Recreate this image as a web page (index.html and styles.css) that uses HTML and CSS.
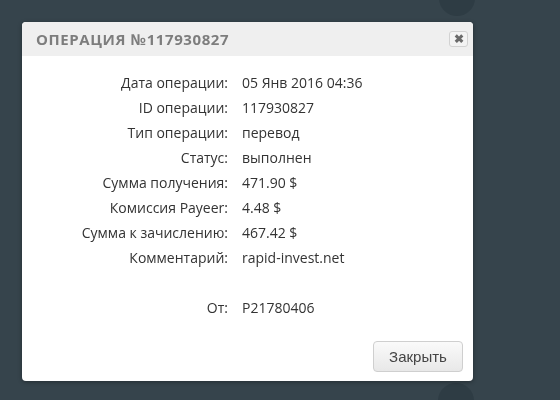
FILE: index.html
```html
<!DOCTYPE html>
<html lang="ru">
  <head>
    <meta charset="UTF-8" />
    <meta name="viewport" content="width=device-width, initial-scale=1.0" />
    <title>Операция</title>
    <link rel="stylesheet" href="styles.css">
  </head>
  <body>
    <div class="page">
      <span class="bubble bubble--top"></span>
      <span class="bubble bubble--bottom"></span>
    </div>

    <div class="modal">
      <div class="modal__header">
        <h2 class="modal__title">Операция №117930827</h2>
        <button class="modal__close" type="button">&#10006;</button>
      </div>

      <div class="modal__body">
        <dl class="details">
          <dt>Дата операции:</dt><dd>05 Янв 2016 04:36</dd>
          <dt>ID операции:</dt><dd>117930827</dd>
          <dt>Тип операции:</dt><dd>перевод</dd>
          <dt>Статус:</dt><dd>выполнен</dd>
          <dt>Сумма получения:</dt><dd>471.90 $</dd>
          <dt>Комиссия Payeer:</dt><dd>4.48 $</dd>
          <dt>Сумма к зачислению:</dt><dd>467.42 $</dd>
          <dt>Комментарий:</dt><dd>rapid-invest.net</dd>
          <dt class="spacer"></dt><dd class="spacer"></dd>
          <dt>От:</dt><dd>P21780406</dd>
        </dl>
      </div>

      <div class="modal__footer">
        <button class="btn" type="button">Закрыть</button>
      </div>
    </div>
  </body>
</html>
```

FILE: styles.css
```css
* {
  box-sizing: border-box;
}
body {
  margin: 0;
  background-color: #36444c;
  font-family: "Open Sans", "Liberation Sans", sans-serif;
}
.page {
  position: relative;
  height: 400px;
  overflow: hidden;
}
.bubble {
  position: absolute;
  width: 36px;
  height: 36px;
  border-radius: 50%;
  background-color: #2e3c44;
}
.bubble--top {
  left: 439px;
  top: -20px;
}
.bubble--bottom {
  left: 438px;
  top: 383px;
}

.modal {
  position: fixed;
  left: 22px;
  top: 22px;
  width: 451px;
  height: 359px;
  background-color: #fff;
  border-radius: 4px;
  box-shadow: 0 1px 4px rgba(0, 0, 0, 0.35);
  display: flex;
  flex-direction: column;
  overflow: hidden;
}
.modal__header {
  display: flex;
  align-items: center;
  justify-content: space-between;
  height: 34px;
  padding: 0 5px 0 14px;
  background-color: #efefef;
}
.modal__title {
  margin: 0;
  font-size: 15px;
  font-weight: 700;
  text-transform: uppercase;
  letter-spacing: 0.6px;
  color: #7d7d7d;
}
.modal__close {
  width: 19px;
  height: 16px;
  padding: 0;
  border: 1px solid #d2d2d2;
  border-radius: 3px;
  background-color: #f3f3f3;
  color: #6a6a6a;
  font-size: 12px;
  font-weight: 700;
  line-height: 14px;
  cursor: pointer;
}

.modal__body {
  flex: 1;
  padding-top: 14px;
}
.details {
  display: grid;
  grid-template-columns: 206px 1fr;
  column-gap: 14px;
  margin: 0;
  font-size: 14px;
  line-height: 25px;
  color: #333;
}
.details dt {
  text-align: right;
}
.details dd {
  margin: 0;
}
.details .spacer {
  height: 25px;
}

.modal__footer {
  display: flex;
  justify-content: flex-end;
  padding: 0 10px 9px;
}
.btn {
  width: 90px;
  height: 31px;
  border: 1px solid #cfcfcf;
  border-radius: 4px;
  background: linear-gradient(#fafafa, #e8e8e8);
  color: #444;
  font-family: "Liberation Sans", Arial, sans-serif;
  font-size: 15px;
  cursor: pointer;
}
```
